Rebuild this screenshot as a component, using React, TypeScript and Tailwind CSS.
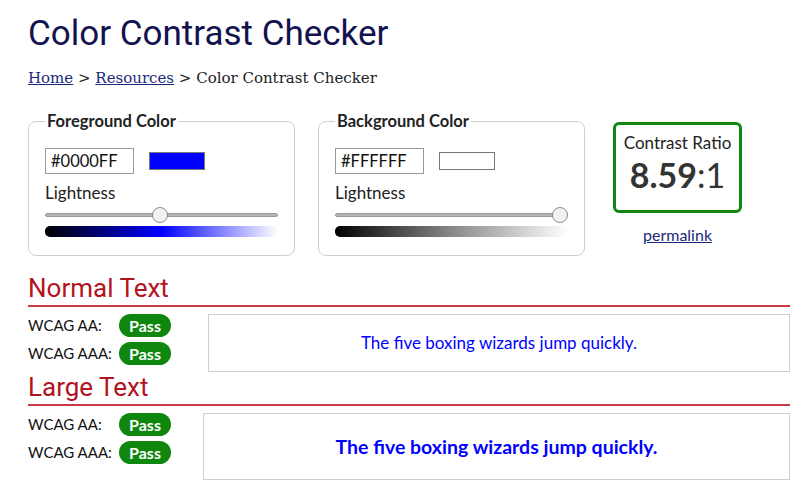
import React from "react";

const sans = "font-['Lato','Noto_Sans',sans-serif]";

const ColorBox = ({
  title,
  hex,
  swatch,
  thumb,
  gradient,
}: {
  title: string;
  hex: string;
  swatch: string;
  thumb: string;
  gradient: string;
}) => (
  <fieldset className="w-[267px] h-[145px] border border-[#cfcfcf] rounded-[8px] px-[16px] pb-[16px]">
    <legend className="px-[2px] text-[16.5px] leading-[20px] font-bold text-[#222]">{title}</legend>
    <div className="flex items-center mt-[17px] gap-[15px]">
      <div className="w-[89px] h-[26px] border border-[#999] px-[5px] text-[16.5px] leading-[24px] text-[#111]">{hex}</div>
      <div className={`w-[56px] h-[18px] border border-[#777] ${swatch}`} />
    </div>
    <div className="mt-[9px] text-[17px] leading-[20px] text-[#222]">Lightness</div>
    <div className="relative mt-[4px] h-[16px] flex items-center">
      <div className="w-full h-[4px] rounded-full bg-[#b5b5b5] border border-[#9a9a9a]" />
      <div
        className={`absolute top-0 w-[16px] h-[16px] rounded-full bg-[#f2f2f2] border border-[#8a8a8a] ${thumb}`}
      />
    </div>
    <div className={`mt-[3px] h-[11px] rounded-[5px] ${gradient}`} />
  </fieldset>
);

const Pass = () => (
  <span className="inline-flex items-center justify-center w-[52px] h-[23px] rounded-full bg-[#0f870f] text-white font-bold text-[16px]">
    Pass
  </span>
);

const Section = ({
  title,
  colClass,
  boxClass,
  textClass,
}: {
  title: string;
  colClass: string;
  boxClass: string;
  textClass: string;
}) => (
  <div>
    <h2 className="font-['Roboto',sans-serif] text-[26px] leading-[30px] text-[#b3121f] border-b-2 border-[#c83a46] pb-[2px]">
      {title}
    </h2>
    <div className="flex mt-[7px]">
      <div className={`flex flex-col gap-[5px] shrink-0 ${colClass}`}>
        <div className="flex items-center">
          <span className="w-[91px] text-[15px] text-[#111]">WCAG AA:</span>
          <Pass />
        </div>
        <div className="flex items-center">
          <span className="w-[91px] text-[15px] text-[#111]">WCAG AAA:</span>
          <Pass />
        </div>
      </div>
      <div className={`flex-1 flex items-center justify-center border border-[#cfcfcf] bg-white ${boxClass}`}>
        <span className={`text-[#0000ff] ${textClass}`}>The five boxing wizards jump quickly.</span>
      </div>
    </div>
  </div>
);

export default function App() {
  return (
    <div className={`w-[800px] h-[487px] overflow-hidden bg-white pl-[28px] pr-[10px] ${sans}`}>
      <h1 className="font-['Roboto',sans-serif] text-[35px] leading-[40px] pt-[14px] text-[#12124f]">
        Color Contrast Checker
      </h1>
      <div className="mt-[14px] font-['DejaVu_Serif',serif] text-[15px] leading-[20px] text-[#222]">
        <a className="underline text-[#1b2a7a]">Home</a> &gt;{" "}
        <a className="underline text-[#1b2a7a]">Resources</a> &gt; Color Contrast Checker
      </div>

      <div className="flex items-start mt-[23px]">
        <ColorBox
          title="Foreground Color"
          hex="#0000FF"
          swatch="bg-[#0000ff]"
          thumb="left-[107px]"
          gradient="bg-[linear-gradient(to_right,#000_0%,#0000ff_50%,#ffffff_100%)]"
        />
        <div className="ml-[23px]">
          <ColorBox
            title="Background Color"
            hex="#FFFFFF"
            swatch="bg-white"
            thumb="right-0"
            gradient="bg-[linear-gradient(to_right,#000_0%,#888_50%,#ffffff_100%)]"
          />
        </div>
        <div className="ml-[28px] mt-[11px] flex flex-col items-center w-[129px]">
          <div className="w-[129px] h-[91px] border-[3px] border-[#118811] rounded-[6px] flex flex-col items-center pt-[8px]">
            <div className="text-[17px] leading-[20px] text-[#222]">Contrast Ratio</div>
            <div className="text-[34px] leading-[44px] text-[#333]">
              <span className="font-bold">8.59</span>:1
            </div>
          </div>
          <a className="mt-[12px] text-[16px] leading-[20px] underline text-[#1b2a7a]">permalink</a>
        </div>
      </div>

      <div className="mt-[17px]">
        <Section title="Normal Text" colClass="w-[180px]" boxClass="h-[58px]" textClass="text-[17px]" />
      </div>
      <div className="mt-[0px]">
        <Section title="Large Text" colClass="w-[175px]" boxClass="h-[67px]" textClass="text-[19.5px] font-bold" />
      </div>
    </div>
  );
}
